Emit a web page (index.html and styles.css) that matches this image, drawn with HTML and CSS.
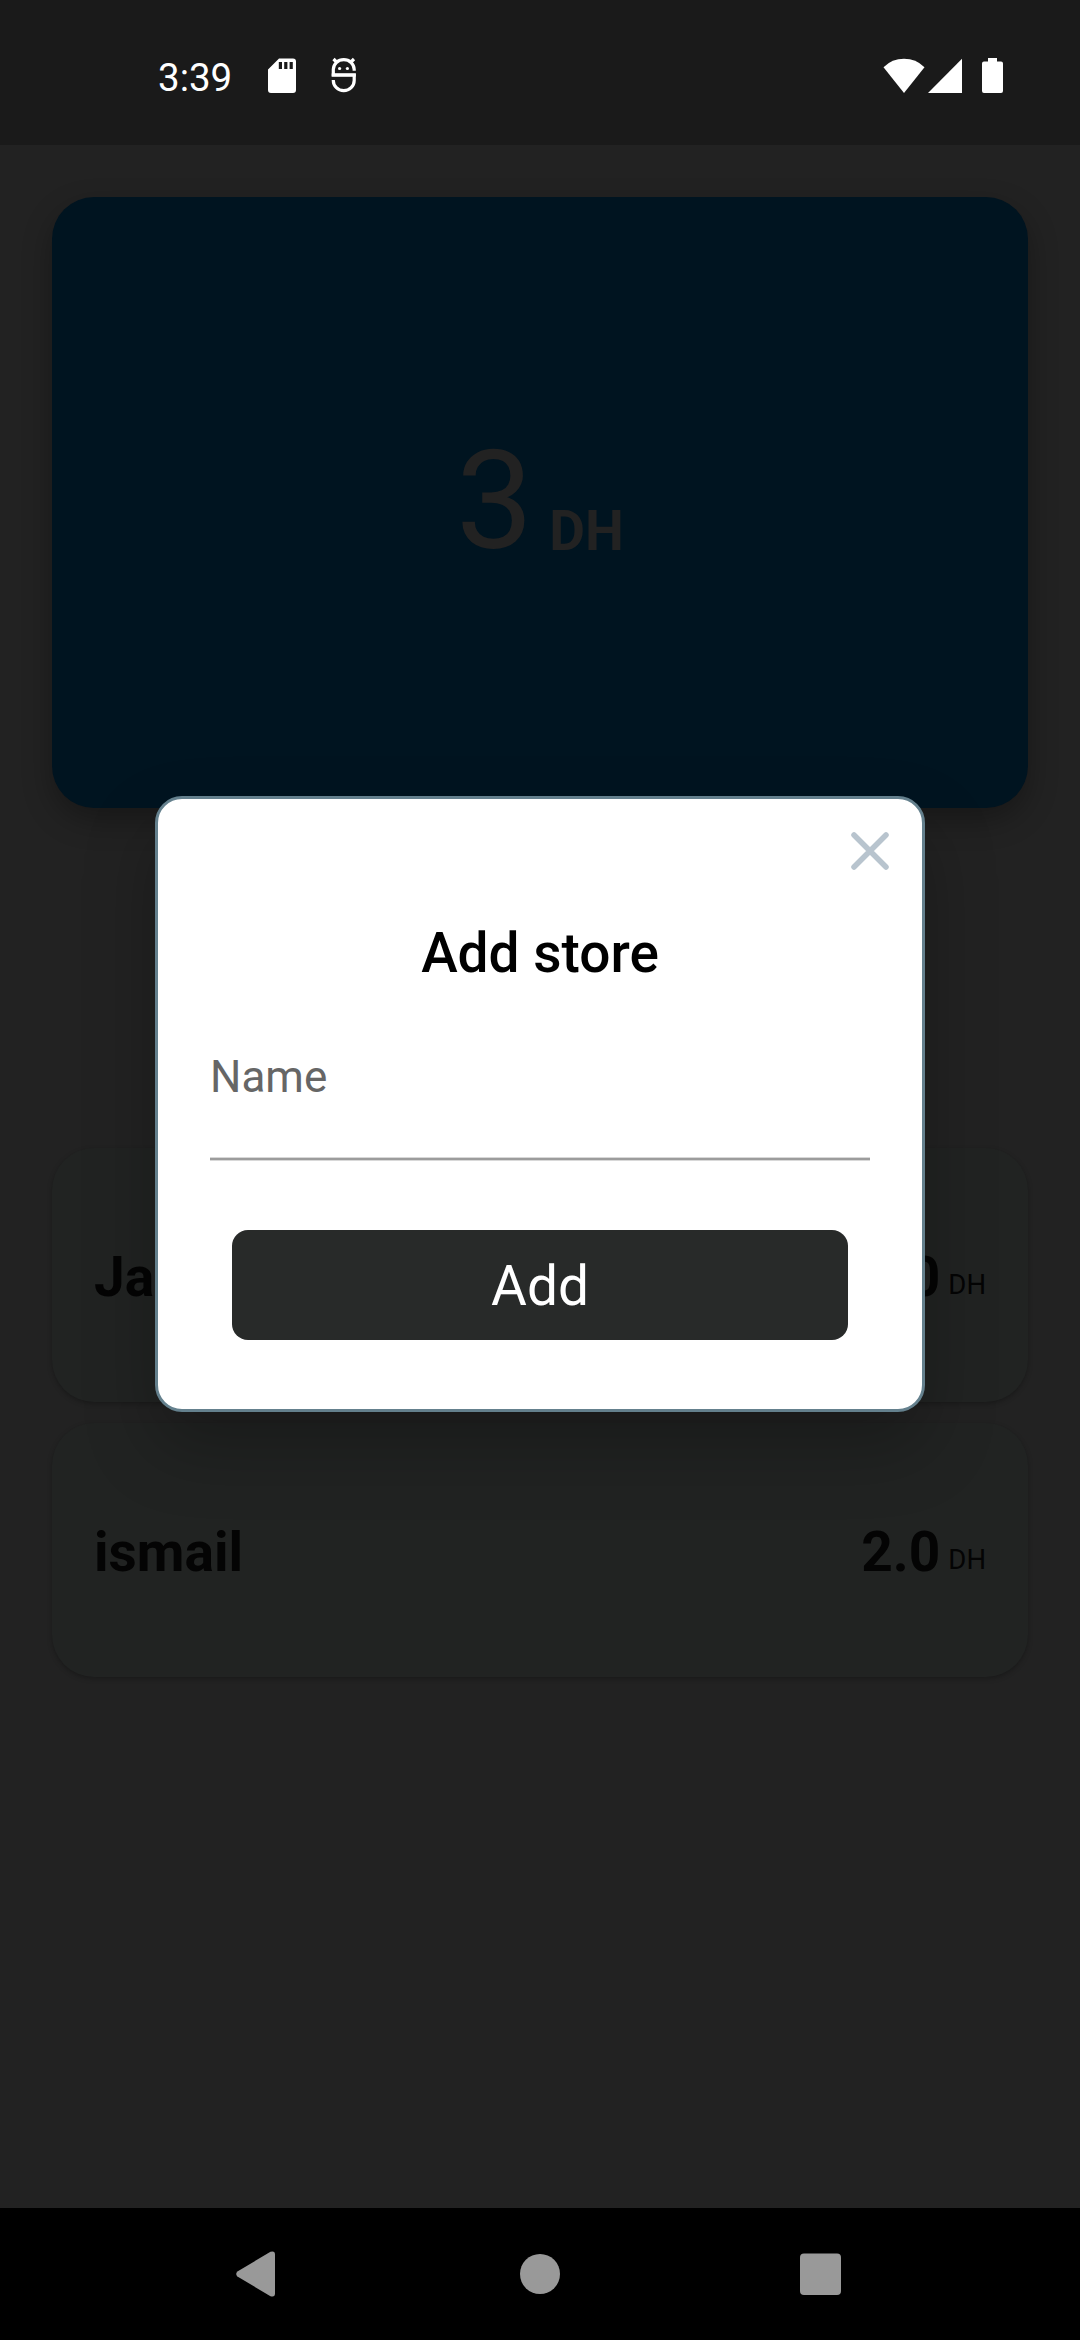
FILE: index.html
```html
<!DOCTYPE html>
<html lang="en">
<head>
<meta charset="utf-8">
<title>Stores</title>
<link rel="stylesheet" href="styles.css">
</head>
<body>
<div class="phone">
  <header class="status">
    <div class="status-left">
      <span class="clock">3:39</span>
      <svg class="sd" width="28" height="36" viewBox="0 0 28 36"><path fill="#fff" fill-rule="evenodd" d="M11 .5H25Q28 .5 28 3.500V32Q28 35 25 35H3Q0 35 0 32V11.500ZM10.800 4V11H14V4ZM16.200 4V11H19.400V4ZM21.600 4V11H24.800V4Z"/></svg>
      <svg class="bug" width="26" height="36" viewBox="0 0 26 36"><g fill="none" stroke="#fff" stroke-width="3.200"><path d="M23.200 13.700V12.500A10.450 9.800 0 0 0 2.300 12.500V18H23.200V23.500A10.450 10.200 0 0 1 2.300 23.500V23"/><path d="M6 5.500L2.500 2M19.500 5.500L23 2"/></g><path stroke="#fff" stroke-width="3.200" d="M.7 18H24.800"/><circle cx="8.600" cy="11.500" r="1.600" fill="#fff"/><circle cx="16.400" cy="11.500" r="1.600" fill="#fff"/></svg>
    </div>
    <div class="status-right">
      <svg width="42" height="36" viewBox="0 0 42 36"><path fill="#fff" d="M.5 9.200Q9 .8 21 .8T41.500 9.200L21 35Z"/></svg>
      <svg class="signal" width="34" height="36" viewBox="0 0 34 36"><path fill="#fff" d="M34 .8V35H0Z"/></svg>
      <svg class="battery" width="21" height="36" viewBox="0 0 21 36"><path fill="#fff" d="M6 0H15V3.500H19Q21 3.500 21 5.500V33Q21 35 19 35H2Q0 35 0 33V5.500Q0 3.500 2 3.500H6Z"/></svg>
    </div>
  </header>
  <main class="content">
    <section class="total"><span class="total-value">3</span><span class="total-unit">DH</span></section>
    <ul class="stores">
      <li class="store"><span class="name">Jad</span><span class="amount">1.0</span><span class="unit">DH</span></li>
      <li class="store"><span class="name">ismail</span><span class="amount">2.0</span><span class="unit">DH</span></li>
    </ul>
  </main>
  <nav class="nav">
    <svg width="40" height="46" viewBox="0 0 40 46"><path fill="#999" d="M1.400 20.500L34.500.8Q39 -.6 39 3.500V42.500Q39 46.600 34.500 45.200L1.400 25.500Q-1 23 1.400 20.500Z"/></svg>
    <svg class="home" width="40" height="40" viewBox="0 0 40 40"><circle cx="20" cy="20" r="20" fill="#999"/></svg>
    <svg class="recents" width="41" height="42" viewBox="0 0 41 42"><rect width="41" height="41.500" y=".5" rx="4" fill="#999"/></svg>
  </nav>
  <div class="dialog" role="dialog">
    <svg class="close" width="40" height="40" viewBox="0 0 40 40"><path d="M4 4L36 36M36 4L4 36" stroke="#b8c4ce" stroke-width="5.500" stroke-linecap="round"/></svg>
    <h1 class="title">Add store</h1>
    <div class="field">Name</div>
    <button class="add">Add</button>
  </div>
</div>
</body>
</html>
```
FILE: styles.css
```css
* { box-sizing: border-box; }
body { margin: 0; font-family: Roboto, sans-serif; }
svg { display: block; flex: none; }

.phone {
  position: relative;
  display: flex;
  flex-direction: column;
  width: 1080px;
  height: 2340px;
  background: #222;
  overflow: hidden;
}

.status {
  display: flex;
  justify-content: space-between;
  height: 145px;
  padding: 57px 77px 0 158px;
  background: #1a1a1a;
  color: #fff;
}
.status-left, .status-right { display: flex; align-items: flex-start; }
.status-right { padding-top: 1px; }
.clock { width: 110px; padding-top: 1px; font-size: 38.5px; line-height: 40px; }
.sd { margin-top: 1px; }
.bug { margin-left: 35px; }
.signal { margin-left: 3px; }
.battery { margin-left: 20px; }

.content { flex: 1; padding: 52px 52px 0; }
.total {
  display: flex;
  align-items: flex-end;
  justify-content: center;
  height: 611px;
  padding-bottom: 226px;
  border-radius: 42px;
  background: #001420;
  color: #222;
  box-shadow: 0 12px 30px rgba(0, 0, 0, .3);
}
.total-value { font-size: 137.5px; line-height: 161px; }
.total-unit { margin: 0 0 19px 16px; font-size: 55px; line-height: 64px; font-weight: 700; }

.stores {
  display: flex;
  flex-direction: column;
  gap: 21px;
  margin: 340px 0 0;
  padding: 0;
  list-style: none;
}
.store {
  display: flex;
  align-items: baseline;
  height: 254px;
  padding: 97px 42px 0 42px;
  border-radius: 42px;
  background: #212322;
  color: #040404;
  box-shadow: 0 2px 5px rgba(0, 0, 0, .25);
}
.name, .amount { font-size: 55px; line-height: 64px; font-weight: 700; }
.amount { margin-left: auto; }
.unit { position: relative; top: -2px; margin-left: 8px; font-size: 27.5px; }

.nav {
  display: flex;
  align-items: center;
  height: 132px;
  padding-left: 236px;
  background: #000;
}
.home { margin-left: 244px; }
.recents { margin-left: 240px; }

.dialog {
  position: absolute;
  left: 155px;
  top: 796px;
  display: flex;
  flex-direction: column;
  width: 770px;
  height: 616px;
  padding: 32px 52px 0;
  border: 3px solid #64808d;
  border-radius: 27px;
  background: #fff;
  box-shadow: 0 34px 70px rgba(0, 0, 0, .25);
}
.close { align-self: flex-end; margin-right: -20px; }
.title {
  margin: 50px 0 0;
  font-size: 55px;
  line-height: 64px;
  font-weight: 500;
  text-align: center;
  color: #000;
}
.field {
  height: 175px;
  padding-top: 66px;
  border-bottom: 2px solid #9c9c9c;
  box-shadow: 0 1px #d8d8d8, inset 0 -1px #d8d8d8;
  font-size: 44px;
  line-height: 52px;
  color: #666;
}
.add {
  height: 110px;
  margin: 70px 22px 0;
  padding: 2px 0 0;
  border: 0;
  border-radius: 16px;
  background: #282a29;
  color: #fff;
  font: 400 55px/108px Roboto, sans-serif;
}
```
